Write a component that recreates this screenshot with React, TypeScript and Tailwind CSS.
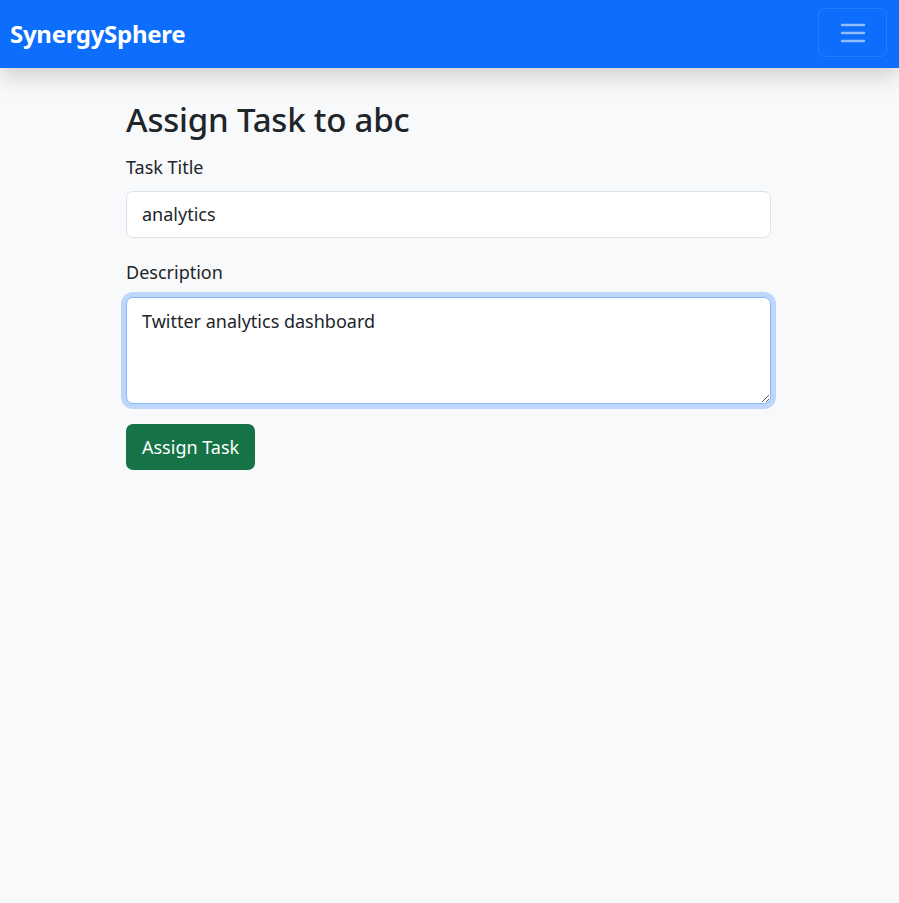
import { useState } from "react";

const font = "font-['Noto_Sans','Open_Sans',sans-serif]";

export default function App() {
  const [title, setTitle] = useState("analytics");
  const [desc, setDesc] = useState("Twitter analytics dashboard");

  return (
    <div className={`min-h-screen bg-[#f8f9fa] text-[#212529] ${font}`}>
      {/* Navbar */}
      <nav className="relative z-10 flex h-[68px] items-start justify-between bg-[#0d6efd] pl-[10px] pr-[12px] pt-[8px] shadow-[0_10px_20px_rgba(0,0,0,0.15)]">
        <a href="#" className="mt-[11px] text-[24px] font-bold leading-[30px] tracking-[-0.3px] text-white">
          SynergySphere
        </a>
        <button className="flex h-[49px] w-[69px] items-center justify-center rounded-[7px] border border-white/10">
          <svg width="30" height="30" viewBox="0 0 30 30">
            <path
              d="M4 7h22M4 15h22M4 23h22"
              stroke="rgba(255,255,255,0.55)"
              strokeWidth="2.4"
              strokeLinecap="round"
            />
          </svg>
        </button>
      </nav>

      {/* Form */}
      <div className="ml-[126px] w-[645px] pt-[29px]">
        <h2 className="mb-[10px] text-[33px] font-medium leading-[46px] tracking-[-0.2px]">Assign Task to abc</h2>

        <div className="mb-[20px]">
          <label className="mb-[9px] block text-[18px] leading-[29px]">Task Title</label>
          <input
            type="text"
            value={title}
            onChange={(e) => setTitle(e.target.value)}
            className="block h-[47px] w-full rounded-[7px] border border-[#dee2e6] bg-white px-[15px] pb-[2px] text-[18px] leading-[29px] outline-none"
          />
        </div>

        <div className="mb-[20px]">
          <label className="mb-[10px] block text-[18px] leading-[29px]">Description</label>
          <textarea
            value={desc}
            onChange={(e) => setDesc(e.target.value)}
            className="block h-[107px] w-full rounded-[7px] border border-[#86b7fe] bg-white px-[15px] pb-[7px] pt-[9px] text-[18px] leading-[29px] shadow-[0_0_0_5px_rgba(13,110,253,0.25)] outline-none"
          />
        </div>

        <button className="h-[46px] rounded-[7px] bg-[#157347] px-[16px] text-[18px] leading-[29px] text-white">
          Assign Task
        </button>
      </div>
    </div>
  );
}
